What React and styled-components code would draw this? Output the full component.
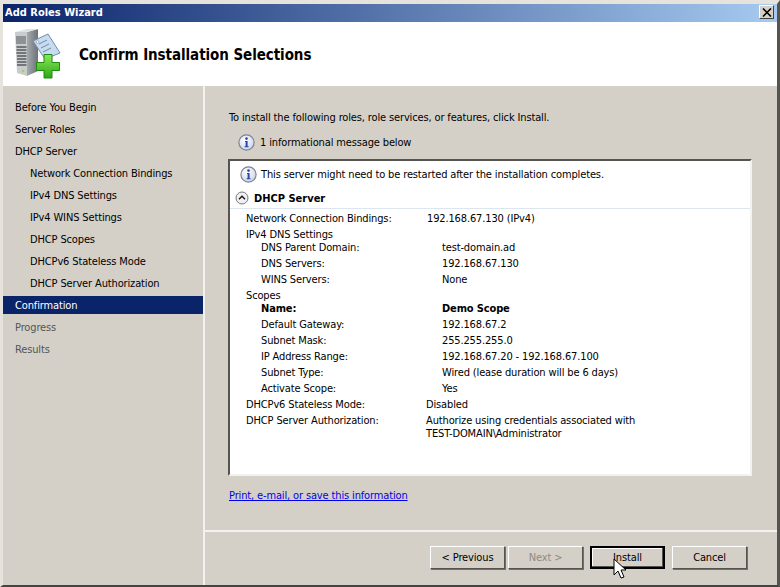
import React from "react";
import styled, { createGlobalStyle } from "styled-components";

const Global = createGlobalStyle`
  html, body { margin: 0; padding: 0; background: #d4d0c8; }
  body { width: 780px; height: 587px; overflow: hidden; font-family: "DejaVu Sans Condensed", "DejaVu Sans", "Noto Sans", sans-serif; font-stretch: condensed; font-size: 11px; letter-spacing: -0.14px; color: #000; }
`;

const Win = styled.div`
  box-sizing: border-box;
  width: 780px;
  height: 587px;
  display: flex;
  flex-direction: column;
  background: #d4d0c8;
  border-style: solid;
  border-width: 4px 3px 2px 3px;
  border-color: #e6e3dc #55544f #44433f #e6e3dc;
`;

const TitleBar = styled.div`
  box-sizing: border-box;
  height: 18px;
  flex: none;
  display: flex;
  align-items: center;
  justify-content: space-between;
  padding: 0 3px 2px 2px;
  background: linear-gradient(90deg, #0a246a 0%, #a6caf0 100%);
`;

const TitleText = styled.span`
  color: #fff;
  font-weight: 700;
  font-size: 11px;
  letter-spacing: 0;
`;

const CloseBtn = styled.div`
  box-sizing: border-box;
  width: 15px;
  height: 14px;
  background: #d4d0c8;
  border-style: solid;
  border-width: 1px;
  border-color: #fff #404040 #404040 #fff;
  display: flex;
  align-items: center;
  justify-content: center;
`;

const Header = styled.div`
  height: 64px;
  flex: none;
  background: #fff;
  display: flex;
  align-items: center;
  padding-left: 11px;
  gap: 17px;
`;

const Heading = styled.h1`
  margin: 2px 0 0;
  font-size: 15px;
  font-weight: 700;
  letter-spacing: -0.07px;
  color: #000;
`;

const Body = styled.div`
  flex: 1;
  display: flex;
  min-height: 0;
`;

const Sidebar = styled.nav`
  width: 200px;
  flex: none;
  padding-top: 12px;
  border-right: 2px solid #f4f2ee;
`;

const NavItem = styled.div`
  height: 18px;
  margin-bottom: 4px;
  display: flex;
  align-items: center;
  padding-left: ${p => (p.$sub ? 27 : 12)}px;
  color: ${p => (p.$active ? "#fff" : p.$muted ? "#555" : "#000")};
  background: ${p => (p.$active ? "#0a246a" : "transparent")};
`;

const Main = styled.div`
  flex: 1;
  display: flex;
  flex-direction: column;
  min-width: 0;
`;

const Content = styled.div`
  flex: 1;
  padding: 23px 25px 0 24px;
`;

const Intro = styled.p`
  margin: 0;
  height: 18px;
  line-height: 18px;
`;

const InfoLine = styled.div`
  display: flex;
  align-items: center;
  gap: 5px;
  margin: 6px 0 0 9px;
  height: 18px;
`;

const ReportBox = styled.div`
  box-sizing: border-box;
  height: 317px;
  margin-top: 8px;
  margin-left: -1px;
  background: #fff;
  border-style: solid;
  border-width: 2px;
  border-color: #55544f #f4f2ee #f4f2ee #55544f;
  padding-top: 4px;
`;

const Notice = styled.div`
  display: flex;
  align-items: center;
  gap: 4px;
  padding-left: 10px;
  height: 18px;
`;

const SectionHead = styled.div`
  display: flex;
  align-items: center;
  gap: 5px;
  height: 20px;
  margin-top: 5px;
  padding-left: 5px;
  font-weight: 700;
  font-size: 11px;
  letter-spacing: 0;
  border-bottom: 1px solid #dce6f0;
`;

const Rows = styled.div`
  padding-top: 2px;
`;

const Row = styled.div`
  display: flex;
  min-height: 16px;
  line-height: 16px;
  padding-left: ${p => (p.$indent ? 31 : 16)}px;
`;

const RowLabel = styled.span`
  flex: none;
  width: ${p => p.$w || 181}px;
  font-weight: ${p => (p.$bold ? 700 : 400)};
`;

const RowValue = styled.span`
  font-weight: ${p => (p.$bold ? 700 : 400)};
  width: 230px;
  line-height: 13px;
  padding-top: 1px;
`;

const Group = styled.div`
  line-height: 16px;
  height: 13px;
  padding-left: 16px;
`;

const LinkLine = styled.a`
  display: inline-block;
  margin-top: 13px;
  color: #0000ee;
  text-decoration: underline;
`;

const Footer = styled.div`
  box-sizing: border-box;
  height: 55px;
  flex: none;
  border-top: 2px solid #f4f2ee;
  display: flex;
  align-items: flex-start;
  justify-content: flex-end;
  gap: 7px;
  padding: 14px 30px 0 0;
`;

const ButtonGroup = styled.div`
  display: flex;
  gap: ${p => p.$gap}px;
`;

const Btn = styled.button`
  box-sizing: border-box;
  width: 75px;
  height: 23px;
  padding: 0;
  font: inherit;
  letter-spacing: inherit;
  color: ${p => (p.disabled ? "#8b8a85" : "#000")};
  background: #d4d0c8;
  border-style: solid;
  border-width: ${p => (p.$def ? 2 : 1)}px;
  border-color: ${p => (p.$def ? "#000" : "#fff #55544f #55544f #fff")};
  box-shadow: ${p => (p.$def ? "inset -1px -1px 0 #55544f, inset 1px 1px 0 #fff" : "1px 1px 0 #706f6a")};
`;

const Cursor = styled.svg`
  position: absolute;
  left: 613px;
  top: 558px;
`;

const InfoIcon = () => (
  <svg width="17" height="17" viewBox="0 0 17 17">
    <defs>
      <radialGradient id="infoFill" cx="40%" cy="35%" r="70%">
        <stop offset="0%" stopColor="#ffffff" />
        <stop offset="100%" stopColor="#ccd3e2" />
      </radialGradient>
    </defs>
    <circle cx="8.5" cy="8.5" r="7.6" fill="url(#infoFill)" stroke="#7d8393" strokeWidth="1.2" />
    <circle cx="8.5" cy="4.6" r="1.3" fill="#2346b8" />
    <path d="M7 7h2.6v5.2h1v1H6.6v-1h1V8H7z" fill="#2346b8" />
  </svg>
);

const CollapseIcon = () => (
  <svg width="14" height="14" viewBox="0 0 14 14">
    <circle cx="7" cy="7" r="6" fill="#f0f0f0" stroke="#77787c" />
    <path d="M4 8.2 7 5.2l3 3" fill="none" stroke="#111" strokeWidth="1.3" />
  </svg>
);

const ServerIcon = () => (
  <svg width="48" height="50" viewBox="0 0 48 50">
    <defs>
      <linearGradient id="towerSide" x1="0" y1="0" x2="1" y2="0">
        <stop offset="0%" stopColor="#a4a9ad" />
        <stop offset="100%" stopColor="#6d7276" />
      </linearGradient>
      <linearGradient id="plus" x1="0" y1="0" x2="0" y2="1">
        <stop offset="0%" stopColor="#8ce85a" />
        <stop offset="100%" stopColor="#2aa812" />
      </linearGradient>
    </defs>
    <path d="M13 3 24 0v42l-11 5z" fill="url(#towerSide)" />
    <path d="M1 3 13 3v44L3 44z" fill="#c9cccf" />
    <path d="M1 3 13 0 24 0 13 3z" fill="#dfe2e4" />
    <path d="M2 7h10v8H2z" fill="#8d9296" />
    <path d="M2.5 18h10M2.5 21h10M2.5 24h10M3 27h9.5M3 30h9.5M3 33h9.5M3 36h9.5" stroke="#55595d" strokeWidth="1.3" />
    <circle cx="9" cy="42" r="1.3" fill="#a4d63a" />
    <path d="M19 12 34 5l12 19-15 6z" fill="#c9dcef" stroke="#6f8cab" />
    <circle cx="23.5" cy="13" r="1.4" fill="#fff" stroke="#6f8cab" strokeWidth="0.6" />
    <path d="M25 15l8-4M27 19l8-4M29 23l8-4" stroke="#6f8cab" />
    <path d="M30 25.5h8v8h7.5v8H38v7.5h-8v-7.5h-7.5v-8H30z" fill="url(#plus)" stroke="#1f8a12" />
  </svg>
);

const navItems = [
  { label: "Before You Begin" },
  { label: "Server Roles" },
  { label: "DHCP Server" },
  { label: "Network Connection Bindings", sub: true },
  { label: "IPv4 DNS Settings", sub: true },
  { label: "IPv4 WINS Settings", sub: true },
  { label: "DHCP Scopes", sub: true },
  { label: "DHCPv6 Stateless Mode", sub: true },
  { label: "DHCP Server Authorization", sub: true },
  { label: "Confirmation", active: true },
  { label: "Progress", muted: true },
  { label: "Results", muted: true },
];

export default function App() {
  return (
    <>
      <Global />
      <Win>
        <TitleBar>
          <TitleText>Add Roles Wizard</TitleText>
          <CloseBtn>
            <svg width="10" height="9" viewBox="0 0 10 9">
              <path d="M1 0.5 9 8.5M9 0.5 1 8.5" stroke="#000" strokeWidth="1.6" />
            </svg>
          </CloseBtn>
        </TitleBar>
        <Header>
          <ServerIcon />
          <Heading>Confirm Installation Selections</Heading>
        </Header>
        <Body>
          <Sidebar>
            {navItems.map(n => (
              <NavItem key={n.label} $sub={n.sub} $active={n.active} $muted={n.muted}>
                {n.label}
              </NavItem>
            ))}
          </Sidebar>
          <Main>
            <Content>
              <Intro>To install the following roles, role services, or features, click Install.</Intro>
              <InfoLine>
                <InfoIcon />
                1 informational message below
              </InfoLine>
              <ReportBox>
                <Notice>
                  <InfoIcon />
                  This server might need to be restarted after the installation completes.
                </Notice>
                <SectionHead>
                  <CollapseIcon />
                  DHCP Server
                </SectionHead>
                <Rows>
                  <Row><RowLabel>Network Connection Bindings:</RowLabel><RowValue>192.168.67.130 (IPv4)</RowValue></Row>
                  <Group>IPv4 DNS Settings</Group>
                  <Row $indent><RowLabel>DNS Parent Domain:</RowLabel><RowValue>test-domain.ad</RowValue></Row>
                  <Row $indent><RowLabel>DNS Servers:</RowLabel><RowValue>192.168.67.130</RowValue></Row>
                  <Row $indent><RowLabel>WINS Servers:</RowLabel><RowValue>None</RowValue></Row>
                  <Group>Scopes</Group>
                  <Row $indent><RowLabel $bold>Name:</RowLabel><RowValue $bold>Demo Scope</RowValue></Row>
                  <Row $indent><RowLabel>Default Gateway:</RowLabel><RowValue>192.168.67.2</RowValue></Row>
                  <Row $indent><RowLabel>Subnet Mask:</RowLabel><RowValue>255.255.255.0</RowValue></Row>
                  <Row $indent><RowLabel>IP Address Range:</RowLabel><RowValue>192.168.67.20 - 192.168.67.100</RowValue></Row>
                  <Row $indent><RowLabel>Subnet Type:</RowLabel><RowValue>Wired (lease duration will be 6 days)</RowValue></Row>
                  <Row $indent><RowLabel>Activate Scope:</RowLabel><RowValue>Yes</RowValue></Row>
                  <Row><RowLabel $w={180}>DHCPv6 Stateless Mode:</RowLabel><RowValue>Disabled</RowValue></Row>
                  <Row><RowLabel $w={180}>DHCP Server Authorization:</RowLabel><RowValue>Authorize using credentials associated with TEST-DOMAIN\Administrator</RowValue></Row>
                </Rows>
              </ReportBox>
              <LinkLine href="#">Print, e-mail, or save this information</LinkLine>
            </Content>
            <Footer>
              <ButtonGroup $gap={3}>
                <Btn>&lt; Previous</Btn>
                <Btn disabled>Next &gt;</Btn>
              </ButtonGroup>
              <ButtonGroup $gap={7}>
                <Btn $def>Install</Btn>
                <Btn>Cancel</Btn>
              </ButtonGroup>
            </Footer>
          </Main>
        </Body>
      </Win>
      <Cursor width="14" height="22" viewBox="0 0 14 22">
        <path d="M1 1v16l4-4 3 7 3-1-3-7h5z" fill="#fff" stroke="#000" strokeWidth="1" />
      </Cursor>
    </>
  );
}
